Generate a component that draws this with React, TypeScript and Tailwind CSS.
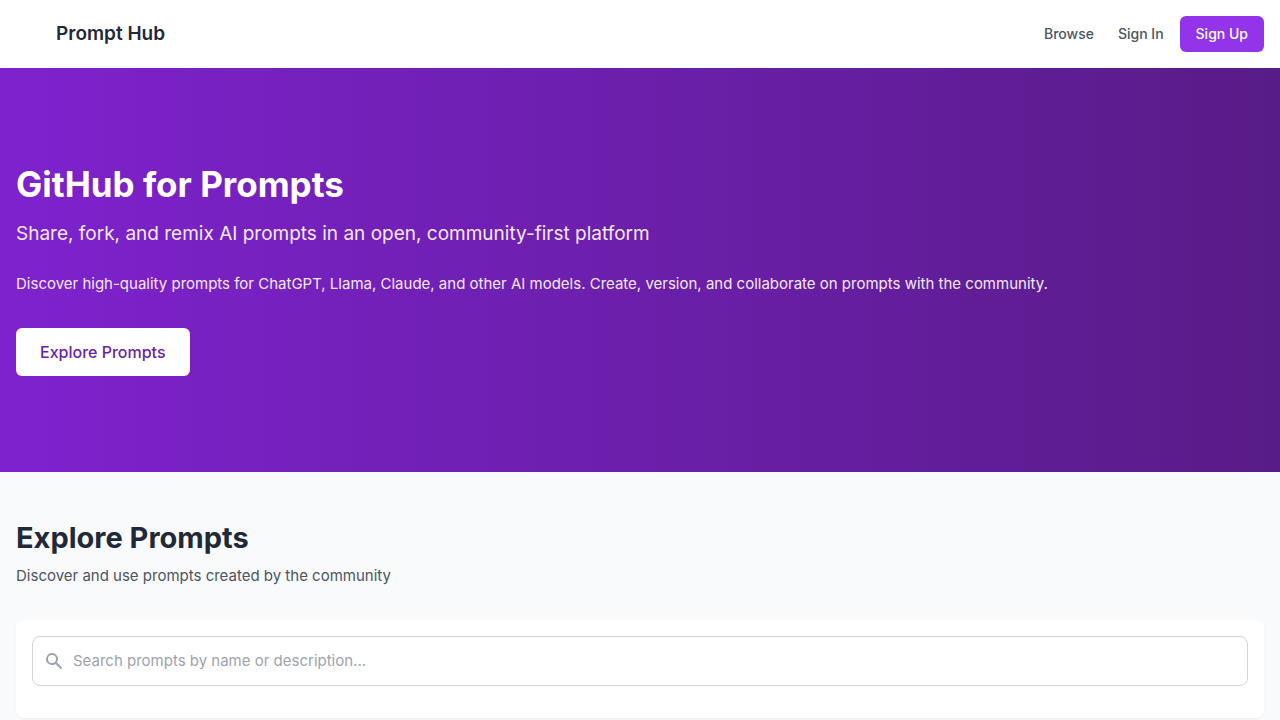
const NAV_LINKS = [
  { label: "Browse", href: "#browse" },
  { label: "Sign In", href: "#signin" },
];

function Navbar() {
  return (
    <header className="bg-white">
      <nav className="flex items-center justify-between py-4 pr-4 pl-14">
        <a href="#home" className="text-[19px]/7 font-semibold text-[#1f2937]">
          Prompt Hub
        </a>
        <div className="flex items-center gap-4 text-sm font-medium">
          <div className="flex items-center gap-6">
            {NAV_LINKS.map((link) => (
              <a key={link.href} href={link.href} className="text-[#4b5563]">
                {link.label}
              </a>
            ))}
          </div>
          <button type="button" className="rounded-md bg-[#9333ea] px-4 py-2 text-white">
            Sign Up
          </button>
        </div>
      </nav>
    </header>
  );
}

function Hero() {
  return (
    <section className="bg-linear-to-r/srgb from-[#7e22ce] to-[#581c87] px-4 py-24 text-white">
      <h1 className="mb-4 text-[35px]/10 font-bold">GitHub for Prompts</h1>
      <p className="mb-6 text-[19px]/7 text-[#f3e8ff]">
        Share, fork, and remix AI prompts in an open, community-first platform
      </p>
      <p className="mb-8 text-[15px]/6 text-[#f3e8ff]">
        Discover high-quality prompts for ChatGPT, Llama, Claude, and other AI models. Create,
        version, and collaborate on prompts with the community.
      </p>
      <a
        href="#explore"
        className="inline-block rounded-md bg-white px-6 py-3 font-medium text-[#6b21a8]"
      >
        Explore Prompts
      </a>
    </section>
  );
}

function SearchCard() {
  return (
    <div className="rounded-lg bg-white px-4 pt-4 pb-8 shadow-xs">
      <div className="relative">
        <svg
          className="pointer-events-none absolute top-1/2 left-3 h-5 w-5 -translate-y-1/2 text-[#9ca3af]"
          viewBox="0 0 20 20"
          fill="currentColor"
          aria-hidden="true"
        >
          <path
            fillRule="evenodd"
            clipRule="evenodd"
            d="M8 4a4 4 0 100 8 4 4 0 000-8zM2 8a6 6 0 1110.89 3.476l4.817 4.817a1 1 0 01-1.414 1.414l-4.816-4.816A6 6 0 012 8z"
          />
        </svg>
        <input
          type="text"
          aria-label="Search prompts"
          placeholder="Search prompts by name or description..."
          className="block w-full rounded-lg border border-[#d1d5db] bg-white py-3 pr-3 pl-10 text-[15px]/6 text-[#1f2937] placeholder:text-[#9ca3af]"
        />
      </div>
    </div>
  );
}

export default function App() {
  return (
    <div className="min-h-screen bg-[#f9fafb] font-['Inter',sans-serif]">
      <Navbar />
      <Hero />
      <main id="explore" className="px-4 pt-12">
        <h2 className="mb-2 text-[29px]/9 font-bold text-[#1f2937]">Explore Prompts</h2>
        <p className="mb-8 text-[15px]/6 text-[#4b5563]">
          Discover and use prompts created by the community
        </p>
        <SearchCard />
      </main>
    </div>
  );
}
